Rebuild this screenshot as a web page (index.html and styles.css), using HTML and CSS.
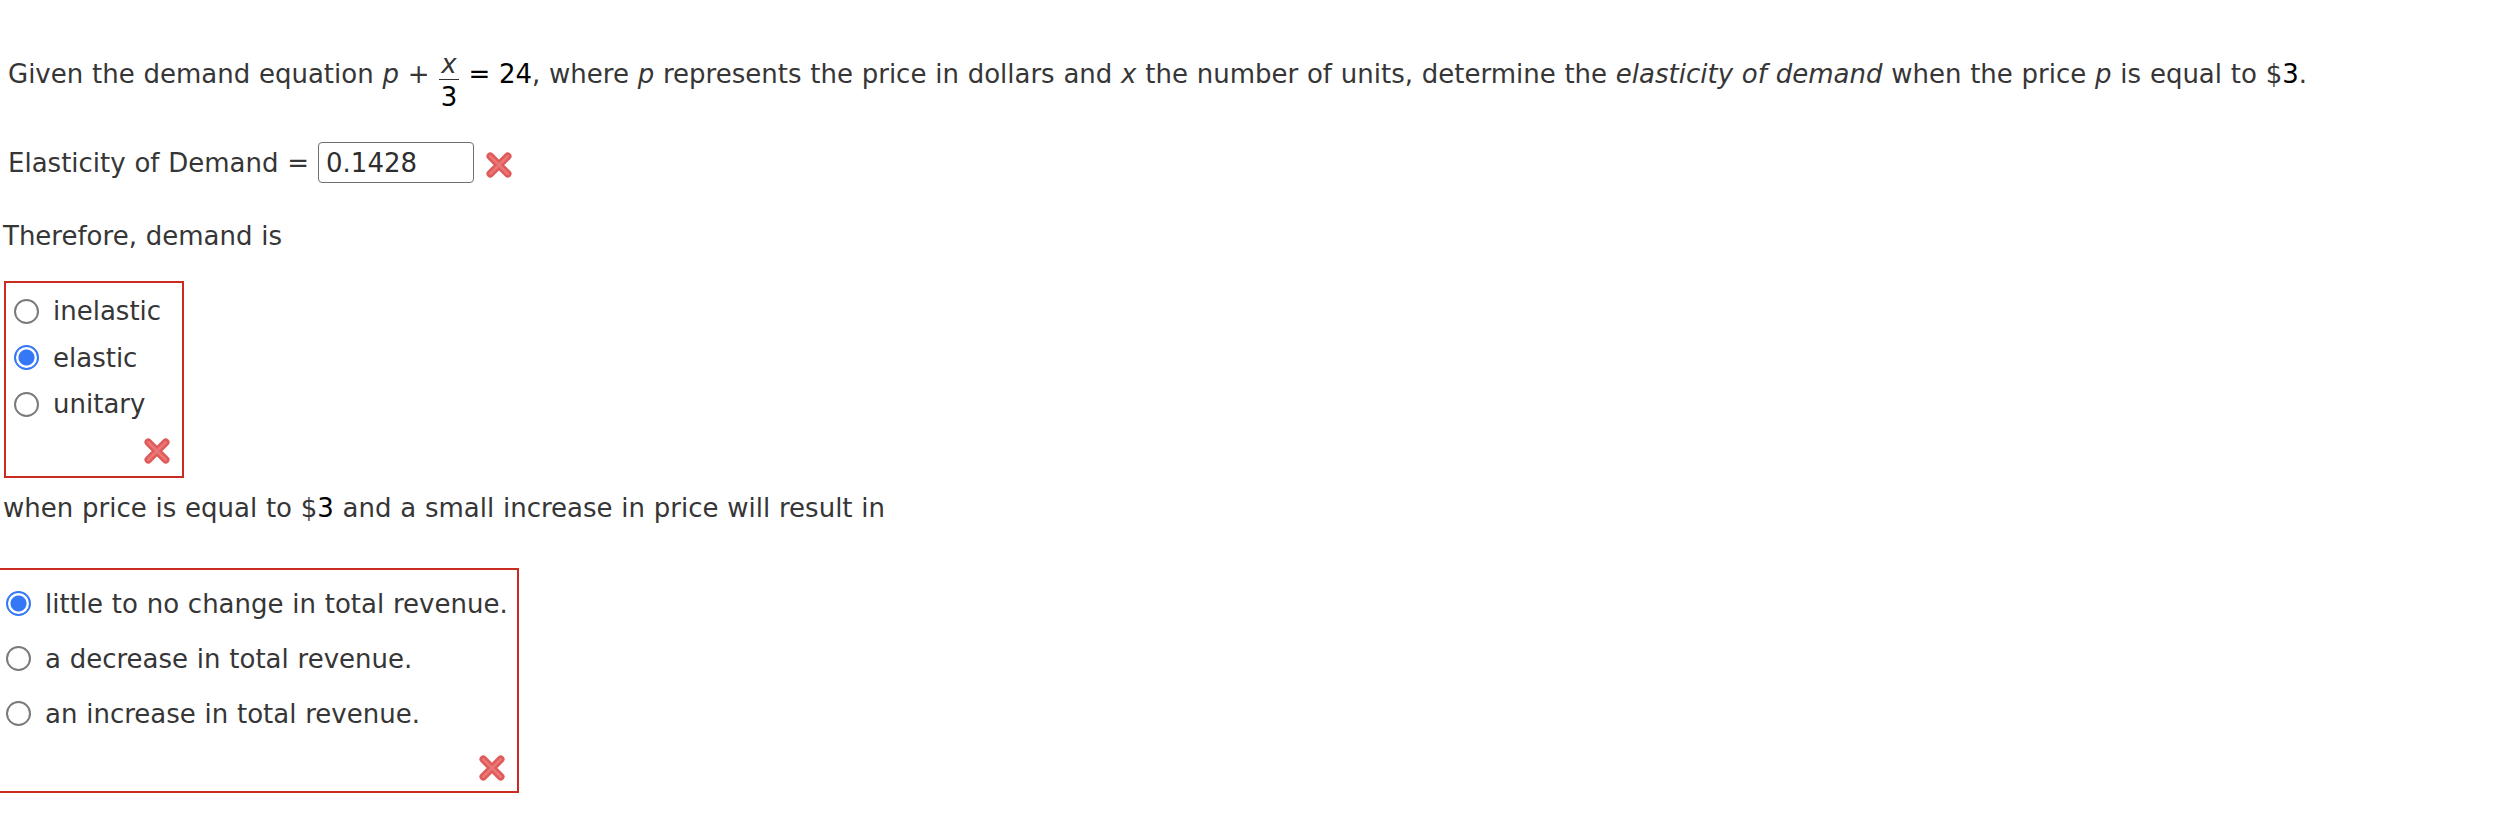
FILE: index.html
```html
<!DOCTYPE html>
<html>
<head>
<meta charset="utf-8">
<link rel="stylesheet" href="styles.css">
</head>
<body>
<div class="page">
  <div class="row1">
    <p class="qtext">Given the demand equation <i>p</i> + <span class="frac"><span class="num"><i>x</i></span><span class="den">3</span></span> <span class="blk">= 24</span>, where <i>p</i> represents the price in dollars and <i>x</i> the number of units, determine the <i>elasticity of demand</i> when the price <i>p</i> is equal to $<span class="blk">3</span>.</p>
  </div>
  <div class="row2">
    <span class="label">Elasticity of Demand =</span>
    <span class="answer">0.1428</span>
    <svg class="xmark" viewBox="0 0 24 24"><path d="M5 5 L19 19 M19 5 L5 19" class="xo"/><path d="M5 5 L19 19 M19 5 L5 19" class="xi"/></svg>
  </div>
  <div class="row3">Therefore, demand is</div>
  <div class="box box1">
    <div class="opt"><span class="radio"></span><span>inelastic</span></div>
    <div class="opt"><span class="radio on"></span><span>elastic</span></div>
    <div class="opt"><span class="radio"></span><span>unitary</span></div>
    <div class="mark"><svg class="xmark" viewBox="0 0 24 24"><path d="M5 5 L19 19 M19 5 L5 19" class="xo"/><path d="M5 5 L19 19 M19 5 L5 19" class="xi"/></svg></div>
  </div>
  <div class="row4">when price is equal to $<span class="blk">3</span> and a small increase in price will result in</div>
  <div class="box box2">
    <div class="opt"><span class="radio on"></span><span>little to no change in total revenue.</span></div>
    <div class="opt"><span class="radio"></span><span>a decrease in total revenue.</span></div>
    <div class="opt"><span class="radio"></span><span>an increase in total revenue.</span></div>
    <div class="mark"><svg class="xmark" viewBox="0 0 24 24"><path d="M5 5 L19 19 M19 5 L5 19" class="xo"/><path d="M5 5 L19 19 M19 5 L5 19" class="xi"/></svg></div>
  </div>
</div>
</body>
</html>
```
FILE: styles.css
```css
html, body {
  margin: 0;
  padding: 0;
  background: #ffffff;
}
body {
  font-family: "DejaVu Sans", Verdana, sans-serif;
  font-size: 26px;
  word-spacing: 0.5px;
  color: #363636;
}
.page {
  padding-top: 40px;
}
.row1 {
  height: 70px;
  display: flex;
  align-items: center;
  padding-left: 8px;
}
.qtext {
  margin: 0;
  white-space: nowrap;
}
.frac {
  display: inline-flex;
  flex-direction: column;
  align-items: center;
  vertical-align: middle;
  margin: 0 1px;
  position: relative;
  top: 6px;
}
.num {
  line-height: 30px;
  padding: 0 2px;
  border-bottom: 1.6px solid #333;
}
.den {
  line-height: 34px;
  color: #000;
}
.blk {
  color: #000;
}
.row2 {
  margin-top: 32px;
  height: 41px;
  display: flex;
  align-items: center;
  padding-left: 8px;
}
.label {
  margin-right: 9px;
}
.answer {
  box-sizing: border-box;
  width: 156px;
  height: 41px;
  border: 1.6px solid #6f6f6f;
  border-radius: 4px;
  padding-left: 7px;
  display: flex;
  align-items: center;
  color: #2e2e2e;
}
.xmark {
  width: 30px;
  height: 30px;
  display: block;
}
.row2 .xmark {
  margin-left: 10px;
  margin-top: 4px;
}
.xo {
  stroke: #e05a5a;
  stroke-width: 6;
  stroke-linecap: round;
  fill: none;
}
.xi {
  stroke: #ea7777;
  stroke-width: 2;
  stroke-linecap: round;
  fill: none;
}
.row3 {
  margin-top: 38px;
  height: 30px;
  line-height: 30px;
  padding-left: 3px;
}
.box {
  border: 2px solid #c92b20;
  box-sizing: border-box;
}
.box1 {
  margin-top: 30px;
  margin-left: 4px;
  width: 180px;
  height: 197px;
  padding: 5px 10px 0 8px;
}
.box1 .opt {
  height: 46.5px;
}
.box1 .mark {
  margin-top: 8px;
}
.box2 {
  margin-top: 45px;
  margin-left: -3px;
  width: 522px;
  height: 225px;
  padding: 6px 10px 0 7px;
}
.box2 .opt {
  height: 55px;
}
.box2 .mark {
  margin-top: 12px;
}
.opt {
  display: flex;
  align-items: center;
  gap: 14px;
  white-space: nowrap;
}
.mark {
  display: flex;
  justify-content: flex-end;
}
.radio {
  box-sizing: border-box;
  width: 25px;
  height: 25px;
  border-radius: 50%;
  border: 2px solid #7a7a7a;
  background: #fff;
  flex: none;
}
.radio.on {
  border: 2.5px solid #3478f6;
  background: radial-gradient(circle, #3478f6 0, #3478f6 7.5px, #ffffff 8.5px);
}
.row4 {
  margin-top: 15px;
  height: 30px;
  line-height: 30px;
  padding-left: 3px;
}
```
